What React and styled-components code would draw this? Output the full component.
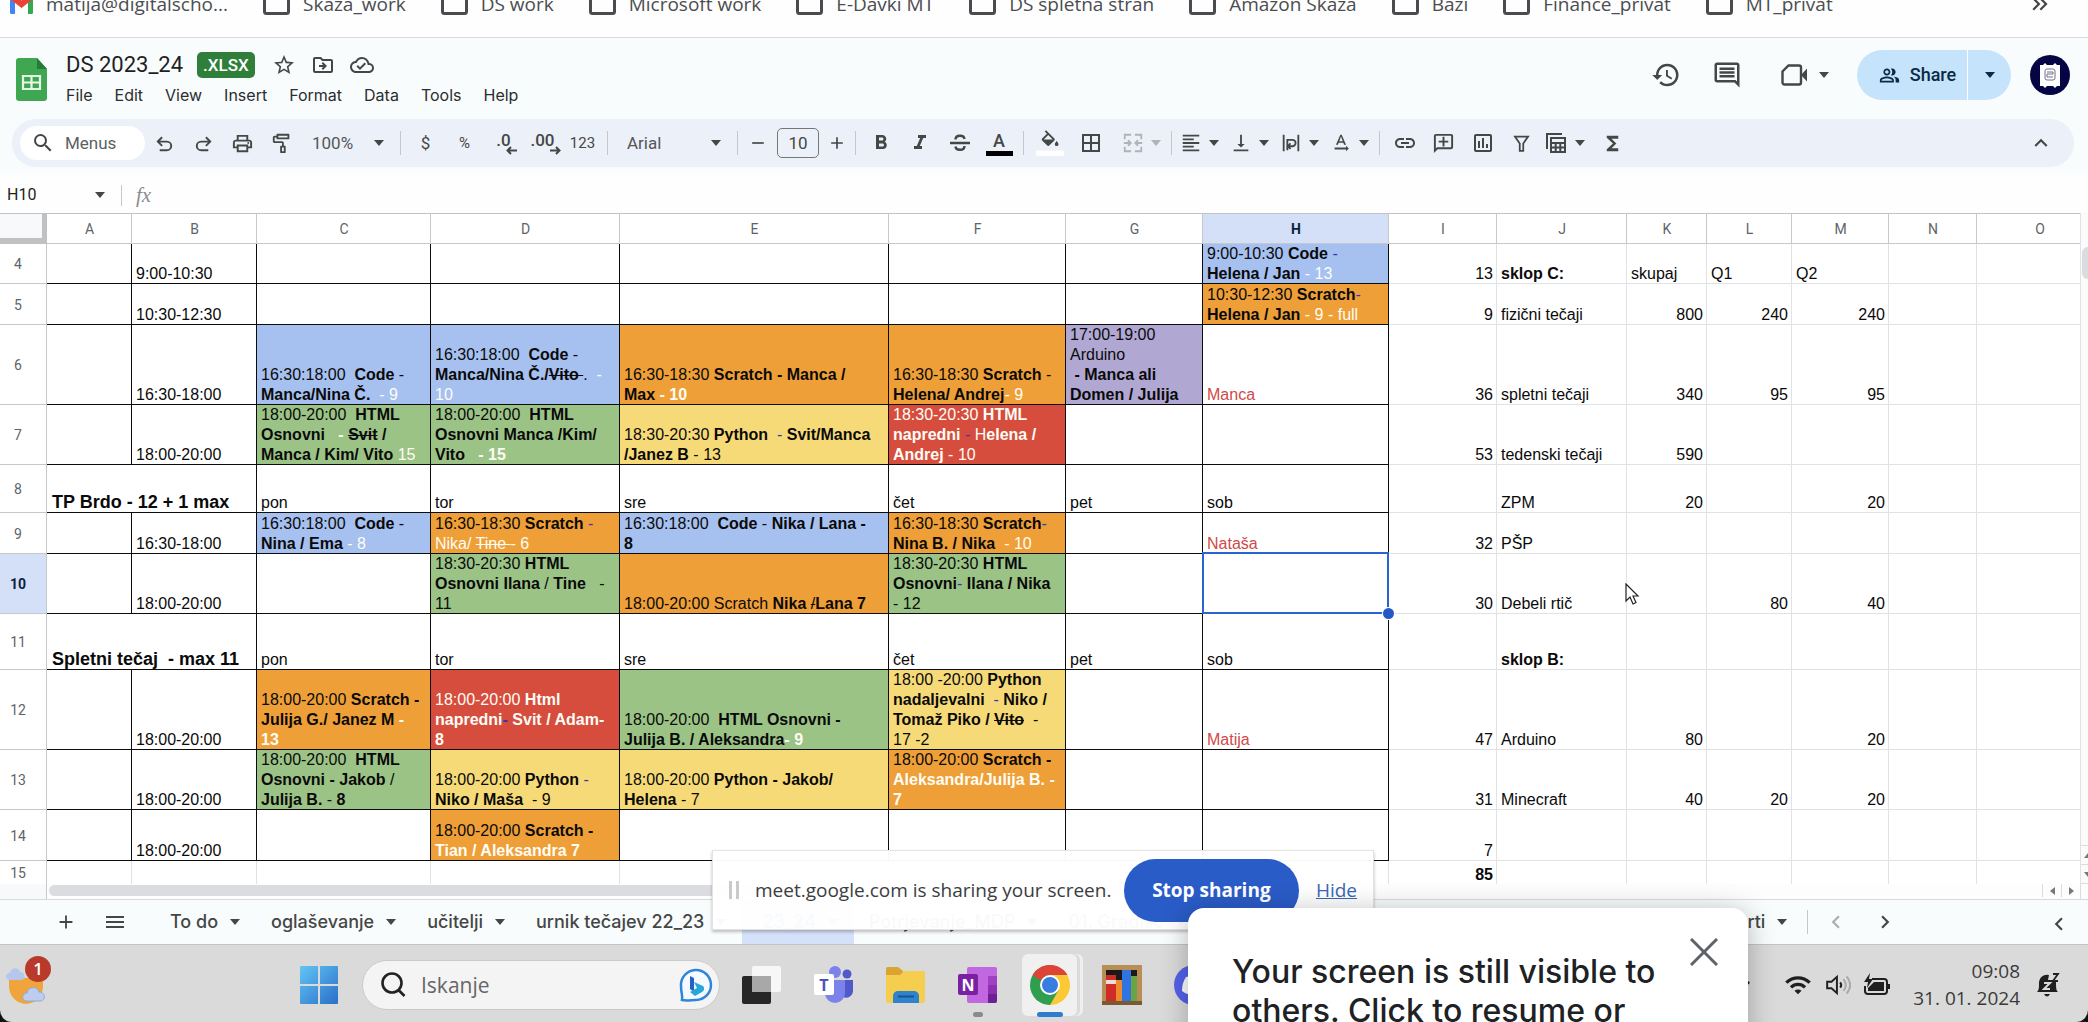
import React from 'react';
import styled, { createGlobalStyle, css } from 'styled-components';
import {
  MdStarBorder, MdOutlineDriveFileMove, MdOutlineCloudDone, MdHistory, MdOutlineComment,
  MdOutlinePeopleAlt, MdFormatBold, MdFormatItalic, MdBorderAll,
  MdFormatAlignLeft, MdVerticalAlignBottom, MdTextRotationNone, MdLink, MdOutlineAddComment,
  MdOutlineInsertChart, MdFunctions, MdOutlinePrint,
  MdOutlineImagesearchRoller, MdKeyboardArrowUp, MdKeyboardArrowDown, MdKeyboardDoubleArrowRight,
  MdSearch, MdAdd, MdRemove, MdMenu, MdChevronLeft, MdChevronRight, MdWifi,
} from 'react-icons/md';

const ui = 'Roboto, "Noto Sans", sans-serif';
const round = 'Inter, Roboto, sans-serif';
const system = '"Open Sans", "Noto Sans", sans-serif';
const sheet = '"Liberation Sans", Arial, sans-serif';

const Global = createGlobalStyle`
  * { box-sizing: border-box; }
  body { margin: 0; overflow: hidden; background: #111; font-family: ${ui}; color: #444746; }
  button, input, select { font: inherit; color: inherit; border: 0; margin: 0; padding: 0; background: none; outline: 0; }
  svg { display: block; flex: none; }
`;

const Screen = styled.div`
  position: relative;
  display: flex;
  flex-direction: column;
  height: 100vh;
  overflow: hidden;
`;

/* ---------- bookmarks ---------- */

const Bookmarks = styled.nav`
  display: flex;
  flex: none;
  align-items: flex-start;
  gap: 35px;
  height: 52px;
  margin-top: -14px;
  padding: 0 35px 0 10px;
  background: #fefefe;
  border-bottom: 1px solid #dadada;
`;

const Bookmark = styled.a`
  display: flex;
  align-items: center;
  gap: 13px;
  height: 36px;
  font: 19px/36px ${system};
  color: #4b4d50;
  text-decoration: none;
  white-space: nowrap;
`;

const More = styled.button`
  height: 36px;
  margin-left: auto;
  color: #444;
`;

const Folder = () => (
  <svg width="27" height="24" viewBox="0 0 27 24" fill="none" stroke="#4a4b4f" strokeWidth="3">
    <path d="M1.500 3.500a2 2 0 0 1 2-2h7l3 4h10a2 2 0 0 1 2 2v12a2 2 0 0 1-2 2h-20a2 2 0 0 1-2-2z" />
  </svg>
);

const Gmail = () => (
  <svg width="23" height="20" viewBox="0 0 23 20">
    <path fill="#4285f4" d="M0 4v14.500A1.500 1.500 0 0 0 1.500 20H5V8z" />
    <path fill="#34a853" d="M23 4v14.500a1.500 1.500 0 0 1-1.500 1.500H18V8z" />
    <path fill="#ea4335" d="M0 4c0-3 3-4 5-2.500L11.500 6.500 18 1.500c2-1.500 5-.5 5 2.500v1l-11.500 9L0 5z" />
  </svg>
);

/* ---------- document header ---------- */

const DocHeader = styled.header`
  display: flex;
  flex: none;
  align-items: flex-start;
  height: 81px;
  padding: 0 18px 0 16px;
  background: #f9fcfd;
`;

const DocLogo = styled.a`
  margin: 20px 19px 0 0;
`;

const DocText = styled.div`
  display: flex;
  flex-direction: column;
  padding-top: 12px;
`;

const TitleRow = styled.div`
  display: flex;
  align-items: center;
  height: 30px;
`;

const Title = styled.h1`
  margin: 0 14px 0 0;
  font: 400 22px/30px ${ui};
  color: #1f1f1f;
`;

const Badge = styled.span`
  margin-right: 17px;
  padding: 0 6px;
  border-radius: 5px;
  background: #2f7f3b;
  color: #fff;
  font: 500 17px/26px ${ui};
`;

const TitleIcons = styled.div`
  display: flex;
  gap: 15px;
`;

const IconButton = styled.button`
  display: flex;
  align-items: center;
  color: #444746;
`;

const MenuBar = styled.div`
  display: flex;
  gap: 22px;
  margin-top: 4px;
`;

const MenuItem = styled.button`
  font: 400 16px/22px ${round};
  color: #2b2d2e;
`;

const DocActions = styled.div`
  display: flex;
  align-items: center;
  gap: 31px;
  height: 50px;
  margin: 12px 0 0 auto;
`;

const Meet = styled.button`
  display: flex;
  align-items: center;
  gap: 10px;
  margin-left: 8px;
  color: #444746;
`;

const ShareGroup = styled.div`
  display: flex;
  gap: 1px;
  height: 50px;
  margin: 0 -12px 0 -4px;
  border-radius: 25px;
  overflow: hidden;
  background: #fff;
`;

const ShareButton = styled.button`
  display: flex;
  align-items: center;
  justify-content: center;
  gap: 10px;
  width: ${(p) => p.$width}px;
  padding-left: ${(p) => p.$pad || 0}px;
  background: #c5e3fb;
  color: #0b2a45;
  font: 500 18px/22px ${ui};
`;

/* ---------- toolbar ---------- */

const ToolbarArea = styled.div`
  flex: none;
  padding: 0 14px 0 12px;
  background: #f9fcfd;
`;

const Toolbar = styled.div`
  display: flex;
  align-items: center;
  height: 48px;
  padding: 0 20px 0 8px;
  border-radius: 24px;
  background: #ecf0f8;
`;

const MenusBox = styled.label`
  display: flex;
  align-items: center;
  gap: 10px;
  width: 125px;
  height: 34px;
  padding-left: 11px;
  border-radius: 17px;
  background: #fff;
  font-size: 17px;
  input { width: 70px; }
  input::placeholder { color: #5c5f62; opacity: 1; }
`;

const Tool = styled.button`
  display: flex;
  flex: none;
  align-items: center;
  justify-content: center;
  width: ${(p) => p.$width || 39}px;
  height: 36px;
  color: ${(p) => (p.$faded ? '#b0b4b9' : '#444746')};
  font-size: ${(p) => (p.$small ? 15 : 17)}px;
`;

const DropTool = styled(Tool)`
  justify-content: flex-start;
  gap: 6px;
  padding-left: ${(p) => p.$pad || 3}px;
`;

const Divider = styled.span`
  flex: none;
  width: 1px;
  height: 24px;
  margin: 0 5px 0 4px;
  background: #c4c8cc;
`;

const Picker = styled.label`
  display: flex;
  flex: none;
  align-items: center;
  width: ${(p) => p.$width}px;
  padding: 0 11px 0 ${(p) => p.$pad}px;
  font-size: 17px;
  select { flex: 1; min-width: 0; appearance: none; color: #54575a; }
`;

const SizeInput = styled.input`
  width: 42px;
  height: 30px;
  margin: 0 4px;
  border: 1px solid #747775;
  border-radius: 5px;
  text-align: center;
  font-size: 17px;
`;

const Decimal = styled.span`
  display: flex;
  flex-direction: column;
  font: 500 17px/16px ${ui};
  svg { align-self: flex-end; margin: -2px -6px 0 0; }
`;

const ColorLetter = styled.span`
  width: 27px;
  border-bottom: 5px solid #000;
  font: 500 18px/20px ${ui};
  text-align: center;
`;

const Collapse = styled(IconButton)`
  margin-left: auto;
`;

const Mirror = styled.span`
  transform: scaleX(-1);
`;

const Caret = () => (
  <svg width="12" height="12" viewBox="0 0 12 12" fill="currentColor"><path d="M1 3h10L6 9z" /></svg>
);

const Glyph = ({ children, size = 24, ...rest }) => (
  <svg width={size} height={size} viewBox="0 0 24 24" fill="none" stroke="currentColor" strokeWidth="2" {...rest}>{children}</svg>
);

const UndoIcon = () => <Glyph size={23}><path d="M7 19h7.500a4.500 4.500 0 0 0 0-9H5M9.500 5.500 5 10l4.500 4.500" /></Glyph>;
const RedoIcon = () => <Glyph size={23}><path d="M17 19H9.500a4.500 4.500 0 0 1 0-9H19M14.500 5.500 19 10l-4.500 4.500" /></Glyph>;
const FilterIcon = () => <Glyph size={21}><path d="M4.500 4h15L14 12v8.500h-4V12z" /></Glyph>;
const StrikeIcon = () => (
  <Glyph size={24} strokeWidth="2.400"><path d="M2 12h20M7.500 8.500C7.500 3.500 16 3.500 16.500 8M16.500 15c0 5-8.500 5-9 .5" /></Glyph>
);
const MergeIcon = () => (
  <Glyph size={22}><path d="M10 3H3v5M3 16v5h7M14 3h7v5M21 16v5h-7M2 12h7M6.500 9l3 3-3 3M22 12h-7M17.500 9l-3 3 3 3" /></Glyph>
);
const WrapIcon = () => (
  <Glyph size={22}><path d="M4 3v18M20 3v18M7 8.500h6.500a3.500 3.500 0 0 1 0 7H9M11.500 12.500l-3 3 3 3M8 8v12" /></Glyph>
);
const TableViewIcon = () => (
  <Glyph size={24}><path d="M3 18V3h15M7 7h14v14H7zM7 12h14M7 16.500h14M11.700 12v9M16.300 12v9" /></Glyph>
);
const FillIcon = () => (
  <svg width="28" height="28" viewBox="0 0 24 24" fill="#444746">
    <path d="M16.560 8.940 7.620 0 6.210 1.410l2.380 2.380-5.150 5.150a1.490 1.490 0 0 0 0 2.120l5.500 5.500c.29.29.68.44 1.060.44s.77-.15 1.060-.44l5.500-5.500c.59-.58.59-1.530 0-2.120zM5.210 10 10 5.210 14.790 10zM19 11.500s-2 2.170-2 3.500a2 2 0 0 0 4 0c0-1.330-2-3.500-2-3.500z" transform="translate(2.500 1) scale(.8)" />
    <path fill="#fff" d="M0 18.500h24v4.500H0z" />
  </svg>
);
const Arrow = ({ right }) => (
  <svg width="11" height="9" viewBox="0 0 11 9" fill="none" stroke="currentColor" strokeWidth="2">
    <path d={right ? 'M0 4.500h9M6 1l3.500 3.500L6 8' : 'M11 4.500H2M5 1 1.500 4.500 5 8'} />
  </svg>
);

/* ---------- formula bar ---------- */

const FormulaBar = styled.div`
  display: flex;
  flex: none;
  align-items: center;
  height: 46px;
  padding: 10px 0 0 7px;
  background: linear-gradient(#f9fcfd, #fefefe 14px);
`;

const NameBox = styled.input`
  width: 87px;
  font: 16px/20px ${ui};
  color: #1f1f1f;
`;

const Fx = styled.label`
  margin-left: 9px;
  font: italic 21px/24px "Liberation Serif", serif;
  color: #8a8d90;
`;

const FormulaDivider = styled(Divider)`
  height: 21px;
  margin-left: 15px;
`;

const FormulaInput = styled.input`
  flex: 1;
  margin-left: 12px;
`;

/* ---------- grid ---------- */

const GridArea = styled.main`
  display: flex;
  flex: 1;
  min-height: 0;
  overflow: hidden;
  background: #fff;
`;

const Viewport = styled.div`
  position: relative;
  flex: 1;
  min-width: 0;
  overflow: hidden;
`;

/* the last column continues past the visible edge */
const Table = styled.table`
  width: calc(100% + 23px);
  table-layout: fixed;
  border-collapse: separate;
  border-spacing: 0;
  font: 16px/20px ${sheet};
  color: #0a0a0a;
`;

const Row = styled.tr`
  height: ${(p) => p.$height}px;
`;

const ColHead = styled.th`
  padding: 0;
  height: 31px;
  font: ${(p) => (p.$active ? 700 : 400)} 14px/20px ${ui};
  color: ${(p) => (p.$active ? '#0b1f3f' : '#606468')};
  background: ${(p) => (p.$active ? '#d4e0f8' : '#fff')};
  box-shadow: inset -1px -1px #c6c8ca, inset 0 1px #c0c2c4;
`;

const Corner = styled(ColHead)`
  background: #f8f9fa;
  box-shadow: inset -5px -6px #bfc1c3, inset 0 1px #c0c2c4;
`;

const RowHead = styled.th`
  padding: 0 11px 0 0;
  font: ${(p) => (p.$active ? 700 : 400)} 14px/20px ${ui};
  color: ${(p) => (p.$active ? '#0b1f3f' : '#606468')};
  background: ${(p) => (p.$active ? '#d4e0f8' : '#fff')};
  box-shadow: inset -1px -1px #c6c8ca;
`;

const fills = {
  blue: '#a6c0f0', orange: '#ef9f37', green: '#9cc386', yellow: '#f7da78', red: '#d64d3e', purple: '#b0a7d2',
};

const Cell = styled.td`
  position: relative;
  padding: 0 4px;
  vertical-align: bottom;
  white-space: pre;
  text-align: ${(p) => (p.$number ? 'right' : 'left')};
  background: ${(p) => fills[p.$fill] || 'transparent'};
  box-shadow: inset -1px -1px ${(p) => (p.$framed ? '#0c0c0c' : '#e1e2e3')};
  ${(p) => p.$heading && css`padding-left: 5px; font: 700 18px/22px ${sheet};`}
`;

const Line = styled.div`
  height: 20px;
`;

const inks = { w: '#fdfdf5', l: '#3a34b8', r: '#cf4a4a' };

const Run = styled.span`
  font-weight: ${(p) => (p.$style.includes('b') ? 700 : 400)};
  text-decoration: ${(p) => (p.$style.includes('s') ? 'line-through' : 'none')};
  color: ${(p) => inks[[...p.$style].find((k) => inks[k])] || 'inherit'};
`;

const Selection = styled.span`
  position: absolute;
  inset: -2px 0 0 -1px;
  border: 2px solid #2a63d2;
  &::after {
    content: '';
    position: absolute;
    right: -7px;
    bottom: -7px;
    width: 11px;
    height: 11px;
    border-radius: 50%;
    background: #2558c4;
    box-shadow: 0 0 0 1px #fff;
    z-index: 2;
  }
`;

const Pointer = styled.svg`
  position: absolute;
  left: 1625px;
  top: 370px;
`;

const VScroll = styled.div`
  display: flex;
  flex-direction: column;
  flex: none;
  width: 8px;
  padding-top: 34px;
  border-left: 1px solid #e0e1e2;
  background: #fbfbfb;
`;

const VThumb = styled.div`
  height: 32px;
  margin-left: 1px;
  border-radius: 6px 0 0 6px;
  background: #dadce0;
`;

const VArrows = styled.div`
  margin-top: auto;
  display: flex;
  flex-direction: column;
  border-top: 1px solid #dadce0;
`;

const VArrow = styled.button`
  display: flex;
  align-items: center;
  width: 7px;
  height: 19px;
  padding-left: 3px;
  overflow: hidden;
  border-bottom: 1px solid #dadce0;
`;

const HScroll = styled.div`
  display: flex;
  flex: none;
  height: 15px;
  background: #fdfdfd;
`;

const HCorner = styled.div`
  width: 47px;
  background: #f8f9fa;
  border-right: 1px solid #c6c8ca;
`;

const HTrack = styled.div`
  flex: 1;
  padding: 1px 2px 3px;
`;

const HThumb = styled.div`
  width: 60%;
  height: 11px;
  border-radius: 6px;
  background: #dadce0;
`;

const HArrow = styled.button`
  display: flex;
  align-items: center;
  justify-content: center;
  width: 19px;
  height: 13px;
  border: solid #dadce0;
  border-width: 0 0 0 1px;
`;

const HEnd = styled.div`
  width: 8px;
  border-left: 1px solid #dadce0;
`;

const columns = [
  ['A', 85], ['B', 125], ['C', 174], ['D', 189], ['E', 269], ['F', 177], ['G', 137], ['H', 186],
  ['I', 108], ['J', 130], ['K', 80], ['L', 85], ['M', 97], ['N', 88], ['O', null],
];

const rows = [
  { n: 4, h: 40, B: '9:00-10:30',
    H: ['blue', ['9:00-10:30 '], ['Code', 'b'], [' -\n', 'l'], ['Helena / Jan', 'b'], [' - 13', 'w']],
    I: 13, J: [null, ['sklop C:', 'b']], K: 'skupaj', L: 'Q1', M: 'Q2' },
  { n: 5, h: 41, B: '10:30-12:30',
    H: ['orange', ['10:30-12:30 '], ['Scratch', 'b'], ['-\n', 'l'], ['Helena / Jan', 'b'], [' - 9 - full', 'w']],
    I: 9, J: 'fizični tečaji', K: 800, L: 240, M: 240 },
  { n: 6, h: 80, B: '16:30-18:00',
    C: ['blue', ['16:30:18:00  '], ['Code', 'b'], [' -\n'], ['Manca/Nina Č.', 'b'], ['  - ', 'w'], ['9', 'w']],
    D: ['blue', ['16:30:18:00  '], ['Code', 'b'], [' -\n'], ['Manca/Nina Č./', 'b'], ['Vito ', 'bs'], ['.'], ['  -\n10', 'w']],
    E: ['orange', ['16:30-18:30 '], ['Scratch - Manca /\nMax', 'b'], [' - 10', 'bw']],
    F: ['orange', ['16:30-18:30 '], ['Scratch', 'b'], [' -\n'], ['Helena/ Andrej', 'b'], ['- 9', 'w']],
    G: ['purple', ['17:00-19:00\nArduino\n '], ['- Manca ali\nDomen / Julija', 'b']],
    H: [null, ['Manca', 'r']],
    I: 36, J: 'spletni tečaji', K: 340, L: 95, M: 95 },
  { n: 7, h: 60, B: '18:00-20:00',
    C: ['green', ['18:00-20:00  '], ['HTML\nOsnovni', 'b'], ['   - ', 'bw'], ['Svit', 'bs'], [' /\nManca / Kim/ Vito', 'b'], [' 15', 'w']],
    D: ['green', ['18:00-20:00  '], ['HTML\nOsnovni Manca /Kim/\nVito', 'b'], ['   - 15', 'bw']],
    E: ['yellow', ['18:30-20:30 '], ['Python', 'b'], ['  - ', 'l'], ['Svit/Manca\n/Janez B', 'b'], [' - 13']],
    F: ['red', ['18:30-20:30 ', 'w'], ['HTML\nnapredni', 'bw'], [' - ', 'l'], ['H', 'w'], ['elena /\nAndrej', 'bw'], [' - 10', 'w']],
    I: 53, J: 'tedenski tečaji', K: 590 },
  { n: 8, h: 48, title: 'TP Brdo - 12 + 1 max', C: 'pon', D: 'tor', E: 'sre', F: 'čet', G: 'pet', H: 'sob', J: 'ZPM', K: 20, M: 20 },
  { n: 9, h: 41, B: '16:30-18:00',
    C: ['blue', ['16:30:18:00  '], ['Code', 'b'], [' -\n'], ['Nina / Ema', 'b'], [' - 8', 'w']],
    D: ['orange', ['16:30-18:30 '], ['Scratch', 'b'], [' -\n', 'l'], ['Nika/ ', 'w'], ['Tine ', 'ws'], ['- 6', 'w']],
    E: ['blue', ['16:30:18:00  '], ['Code', 'b'], [' - '], ['Nika / Lana -\n8', 'b']],
    F: ['orange', ['16:30-18:30 '], ['Scratch', 'b'], ['-\n', 'l'], ['Nina B. / Nika', 'b'], ['  - 10', 'w']],
    H: [null, ['Nataša', 'r']],
    I: 32, J: 'PŠP' },
  { n: 10, h: 60, B: '18:00-20:00',
    D: ['green', ['18:30-20:30 '], ['HTML\nOsnovni Ilana', 'b'], [' / '], ['Tine', 'b'], ['   -\n11']],
    E: ['orange', ['18:00-20:00 Scratch '], ['Nika ', 'b'], ['/', 's'], ['Lana 7', 'b']],
    F: ['green', ['18:30-20:30 '], ['HTML\nOsnovni', 'b'], ['- ', 'l'], ['Ilana / Nika\n', 'b'], ['- 12']],
    I: 30, J: 'Debeli rtič', L: 80, M: 40 },
  { n: 11, h: 56, title: 'Spletni tečaj  - max 11', C: 'pon', D: 'tor', E: 'sre', F: 'čet', G: 'pet', H: 'sob', J: [null, ['sklop B:', 'b']] },
  { n: 12, h: 80, B: '18:00-20:00',
    C: ['orange', ['18:00-20:00 '], ['Scratch -\nJulija G./ Janez M', 'b'], [' -\n13', 'bw']],
    D: ['red', ['18:00-20:00 ', 'w'], ['Html\nnapredni', 'bw'], ['-', 'bl'], [' Svit / Adam-\n8', 'bw']],
    E: ['green', ['18:00-20:00  '], ['HTML Osnovni -\nJulija B. / Aleksandra', 'b'], ['- 9', 'bw']],
    F: ['yellow', ['18:00 -20:00 '], ['Python\nnadaljevalni', 'b'], ['  - ', 'l'], ['Niko /\nTomaž Piko / ', 'b'], ['Vito', 'bs'], ['  -\n17 -2']],
    H: [null, ['Matija', 'r']],
    I: 47, J: 'Arduino', K: 80, M: 20 },
  { n: 13, h: 60, B: '18:00-20:00',
    C: ['green', ['18:00-20:00  '], ['HTML\nOsnovni - Jakob', 'b'], [' /\n'], ['Julija B.', 'b'], [' - '], ['8', 'b']],
    D: ['yellow', ['18:00-20:00 '], ['Python', 'b'], [' -\n', 'l'], ['Niko / Maša', 'b'], ['  - 9']],
    E: ['yellow', ['18:00-20:00 '], ['Python - Jakob/\nHelena', 'b'], [' - 7']],
    F: ['orange', ['18:00-20:00 '], ['Scratch -\n', 'b'], ['Aleksandra/Julija B. -\n7', 'bw']],
    I: 31, J: 'Minecraft', K: 40, L: 20, M: 20 },
  { n: 14, h: 51, B: '18:00-20:00',
    D: ['orange', ['18:00-20:00 '], ['Scratch -\n', 'b'], ['Tian / Aleksandra 7', 'bw']],
    I: 7 },
  { n: 15, h: 24, I: [null, ['85', 'b']] },
];

/* splits styled runs at their line breaks into one list of runs per line */
const toLines = (runs) => {
  const lines = [[]];
  runs.forEach(([text, style = '']) => {
    text.split('\n').forEach((part, i) => {
      if (i > 0) lines.push([]);
      if (part) lines[lines.length - 1].push([part, style]);
    });
  });
  return lines;
};

const SheetCell = ({ row, col }) => {
  const value = row[col];
  const framed = row.n < 15 && col <= 'H';
  const rich = Array.isArray(value);
  return (
    <Cell $framed={framed} $fill={rich ? value[0] : null} $number={typeof value === 'number' || col === 'I'}>
      {rich
        ? toLines(value.slice(1)).map((line, i) => (
          <Line key={i}>{line.map(([text, style], k) => <Run key={k} $style={style}>{text}</Run>)}</Line>
        ))
        : value}
      {row.n === 10 && col === 'H' && <Selection />}
    </Cell>
  );
};

/* ---------- sheet tabs ---------- */

const TabBar = styled.nav`
  display: flex;
  flex: none;
  align-items: center;
  height: 45px;
  padding-left: 53px;
  background: #f9fcfd;
  border-top: 1px solid #d8dadc;
`;

const TabTool = styled.button`
  display: flex;
  justify-content: center;
  width: 25px;
  margin-right: 24px;
  color: #444746;
`;

const Tab = styled.button`
  display: flex;
  flex: none;
  align-items: center;
  gap: 11px;
  height: 44px;
  padding: 0 15px 0 ${(p) => (p.$active ? 20 : 15)}px;
  background: ${(p) => (p.$active ? '#d5e1f8' : 'transparent')};
  color: ${(p) => (p.$active ? '#0b57d0' : '#444746')};
  font: 500 18px/22px ${round};
  white-space: nowrap;
`;

const TabList = styled.div`
  display: flex;
  margin-left: 4px;
  flex: 0 0 81%;
  overflow: hidden;
`;

const LastTab = styled(Tab)`
  margin-left: auto;
`;

const TabNav = styled.button`
  margin-left: ${(p) => p.$gap}px;
  color: ${(p) => (p.$faded ? '#a9adb0' : '#444746')};
`;

const TabCollapse = styled(TabNav)`
  margin: 4px 16px 0 auto;
`;

/* ---------- taskbar ---------- */

const Taskbar = styled.footer`
  position: relative;
  display: flex;
  flex: none;
  align-items: center;
  height: 78px;
  padding: 3px 28px 0 6px;
  border-top: 1px solid #c4c4c4;
  border-radius: 0 0 12px 12px;
  background: #dadadb;
`;

const Weather = styled.button`
  position: relative;
  width: 46px;
  margin-right: 248px;
`;

const Count = styled.span`
  position: absolute;
  right: 1px;
  top: -10px;
  width: 26px;
  height: 26px;
  border-radius: 50%;
  background: #b93a2a;
  color: #fff;
  font: 600 17px/26px ${system};
  text-align: center;
`;

const TaskSearch = styled.label`
  display: flex;
  align-items: center;
  width: 358px;
  height: 50px;
  margin: 0 22px 0 24px;
  padding: 0 6px 0 17px;
  border: 1px solid #cacaca;
  border-radius: 25px;
  background: #f4f4f4;
  font: 21px/28px ${system};
  color: #5c5c5c;
  input { flex: 1; min-width: 0; margin-left: 15px; }
  input::placeholder { color: #666; opacity: 1; }
`;

const Apps = styled.div`
  display: flex;
  gap: 17px;
  margin-left: -8px;
`;

const AppButton = styled.button`
  position: relative;
  display: flex;
  align-items: center;
  justify-content: center;
  width: 55px;
  height: 62px;
  border-radius: 6px;
  ${(p) => p.$open && css`background: #f0f0f1; box-shadow: 3px 0 #dadadb, 6px 0 #efefef;`}
  ${(p) => p.$mark && css`
    &::after {
      content: '';
      position: absolute;
      bottom: -1px;
      width: ${p.$mark}px;
      height: 5px;
      border-radius: 3px;
      background: ${p.$open ? '#2f7bd0' : '#8a8a8a'};
    }
  `}
`;

const Tray = styled.div`
  display: flex;
  align-items: center;
  gap: 13px;
  margin-left: auto;
  color: #1f1f1f;
`;

const TrayToggle = styled.button`
  margin-right: 14px;
`;

const Clock = styled.time`
  display: flex;
  flex-direction: column;
  margin: 0 3px 0 10px;
  font: 19px/27px ${system};
  color: #3a3a3a;
  text-align: right;
`;

const StartIcon = () => (
  <svg width="38" height="38" viewBox="0 0 38 38">
    <defs><linearGradient id="win" x1="0" y1="0" x2="1" y2="1"><stop offset="0" stopColor="#62c5f5" /><stop offset="1" stopColor="#2a6fc8" /></linearGradient></defs>
    <path fill="url(#win)" d="M0 1a1 1 0 0 1 1-1h17v18H0zM20 0h17a1 1 0 0 1 1 1v17H20zM0 20h18v18H1a1 1 0 0 1-1-1zM20 20h18v17a1 1 0 0 1-1 1H20z" />
  </svg>
);
const WeatherIcon = () => (
  <svg width="42" height="38" viewBox="0 0 42 38">
    <path d="M3 12h34v8a17 18 0 0 1-34 0z" fill="#f0a53c" />
    <path d="M3 14c-4-1-4-7 1-7 1-6 9-6 10-1 6 0 6 8 1 8z" fill="#b5c7ec" />
    <path d="M20 35c-5-1-4-8 1-8 1-7 11-7 12-1 7 0 7 9 1 9z" fill="#bccdf0" stroke="#93a9dc" />
  </svg>
);
const BingIcon = () => (
  <svg width="34" height="34" viewBox="0 0 34 34" fill="none">
    <path d="M3 32c1-4-1-7-1-14A15 15 0 1 1 17 32c-5 0-9 1-14 0z" fill="#f4faff" stroke="#2f86d8" strokeWidth="2.500" />
    <path d="M11 8l4 2v14l-4-3z" fill="#2462c8" />
    <path d="M15 14l9 4c2 2 1 5-1 6l-7 4-5-4 7-4z" fill="#27a8d8" />
  </svg>
);
const TaskViewIcon = () => (
  <svg width="39" height="38" viewBox="0 0 39 38">
    <rect y="10" width="29" height="28" rx="2" fill="#262626" />
    <rect x="10" width="29" height="26" rx="2" fill="#f7f7f7" />
    <path d="M10 10h19v16H10z" fill="#a8a8a8" />
  </svg>
);
const TileLetter = styled.span`
  position: absolute;
  left: 8px;
  top: 20px;
  width: 20px;
  font: 700 16px/22px ${system};
  color: ${(p) => p.$ink};
  text-align: center;
`;
const TeamsIcon = () => (
  <svg width="39" height="38" viewBox="0 0 39 38">
    <circle cx="21" cy="6" r="6" fill="#7b83eb" /><circle cx="33" cy="8" r="4.500" fill="#5059c9" />
    <path d="M27 14h12v11a7 7 0 0 1-10 6z" fill="#5059c9" />
    <path d="M11 14h20v13a10 10 0 0 1-20 0z" fill="#7b83eb" />
    <rect y="8" width="20" height="21" rx="2" fill="#fff" />
  </svg>
);
const ExplorerIcon = () => (
  <svg width="39" height="36" viewBox="0 0 39 36">
    <path d="M0 2a2 2 0 0 1 2-2h10l5 4v6H0z" fill="#d9a430" />
    <path d="M0 8h14l4-4h19a2 2 0 0 1 2 2v28a2 2 0 0 1-2 2H2a2 2 0 0 1-2-2z" fill="#f5cd4f" />
    <path d="M7 36V29a5 5 0 0 1 5-5h16a5 5 0 0 1 5 5v7z" fill="#2f83cc" /><path d="M12 29.500h16" stroke="#17548f" strokeWidth="2" />
  </svg>
);
const OneNoteIcon = () => (
  <svg width="39" height="36" viewBox="0 0 39 36">
    <rect x="9" width="30" height="36" rx="2" fill="#c168e0" /><path d="M30 9h9v9h-9z" fill="#a33fc4" /><path d="M30 18h9v9h-9z" fill="#8c2fb0" /><path d="M30 27h9v7a2 2 0 0 1-2 2h-7z" fill="#6d1f94" />
    <rect y="7" width="20" height="21" rx="2" fill="#7a21a3" />
  </svg>
);
const ChromeIcon = () => (
  <svg width="40" height="40" viewBox="0 0 40 40">
    <path d="M20 20 2.700 10A20 20 0 0 1 37.300 10z" fill="#db4437" />
    <path d="M20 20 37.300 10A20 20 0 0 1 20 40z" fill="#fbc934" />
    <path d="M20 20v20A20 20 0 0 1 2.700 10z" fill="#2f9e4f" />
    <path d="M20 10h17.300L28.700 25z" fill="#fbc934" /><path d="M11.300 25 2.700 10 20 10z" fill="#2f9e4f" /><path d="M2.700 10A20 20 0 0 1 37.300 10H20a10 10 0 0 0-9 6z" fill="#db4437" />
    <path d="M28.700 25 20 40l-2-10z" fill="#2f9e4f" />
    <circle cx="20" cy="20" r="10" fill="#fff" /><circle cx="20" cy="20" r="8" fill="#3a7de0" />
  </svg>
);
const BooksIcon = () => (
  <svg width="40" height="40" viewBox="0 0 40 40">
    <path d="M0 0h40v40H0z" fill="#b98e56" /><path d="M4 5h31v31H4z" fill="#1a1a1a" />
    <path d="M4 10h10v26H4z" fill="#cf2c28" /><path d="M4 15h10v4H4z" fill="#f2dcd8" /><path d="M14 15h6v21h-6z" fill="#ef8a2c" /><path d="M20 5h9v31h-9z" fill="#2f74e0" /><path d="M29 11h6v25h-6z" fill="#6aa544" /><path d="M0 36h40v4H0z" fill="#7a5a30" />
  </svg>
);
const DiscordIcon = () => (
  <svg width="40" height="40" viewBox="0 0 40 40"><circle cx="20" cy="20" r="20" fill="#5562ea" /><path d="M12 12q8-3 16 0 4 6 4 14-4 3-6 3l-2-3h-8l-2 3q-2 0-6-3 0-8 4-14z" fill="#fff" /></svg>
);
const SpeakerIcon = () => (
  <Glyph size={26} strokeWidth="1.800"><path d="M2 9v6h4l5 4.500v-15L6 9zM14 9.500q2 2.500 0 5" /><path d="M17 6.500q4.500 5.500 0 11M20 4q6.500 8 0 16" stroke="#aaa" /></Glyph>
);
const BatteryIcon = () => (
  <svg width="26" height="24" viewBox="0 0 26 24"><path d="M8 6h12a3 3 0 0 1 3 3v9a3 3 0 0 1-3 3H4a3 3 0 0 1-3-3v-5" fill="none" stroke="#1f1f1f" strokeWidth="2" /><path d="M4 15 10 9h10v9H4zM24 11h2v5h-2zM6 0 0 9h4l-1 6 6-9H5z" fill="#1f1f1f" /></svg>
);
const BellIcon = () => (
  <svg width="24" height="26" viewBox="0 0 24 26"><path d="M1 20c2-2 2-4 2-9a8 8 0 0 1 10-8l-1 5h8c0 8 0 10 2 12zM8 22h6q-3 5-6 0z" fill="#1f1f1f" /><path d="M8 11h6l-6 6h6" fill="none" stroke="#dadadb" strokeWidth="2" /><path d="M17 2h5l-5 7h5" fill="none" stroke="#1f1f1f" strokeWidth="1.800" /></svg>
);

/* ---------- overlays ---------- */

const ShareNotice = styled.aside`
  position: absolute;
  left: 34.1%;
  bottom: 92px;
  display: flex;
  align-items: center;
  width: 662px;
  height: 80px;
  padding: 0 16px;
  border: 1px solid #e3e3e3;
  background: rgba(255, 255, 255, 0.97);
  box-shadow: 0 2px 3px rgba(0, 0, 0, 0.25);
  font: 19px/28px ${system};
  color: #3b3d40;
  white-space: nowrap;
`;

const Grip = styled.span`
  width: 10px;
  height: 18px;
  margin-right: 16px;
  border: solid #c9cacc;
  border-width: 0 3px;
`;

const StopButton = styled.button`
  flex: none;
  width: 175px;
  height: 63px;
  margin: 0 17px 0 auto;
  border-radius: 32px;
  background: #2a5cc8;
  color: #fff;
  font: 700 19px/28px ${system};
`;

const HideLink = styled.a`
  color: #3a67b8;
`;

const Dialog = styled.section`
  position: absolute;
  left: 56.9%;
  bottom: -86px;
  display: flex;
  width: 560px;
  height: 200px;
  padding: 44px 30px 0 44px;
  border-radius: 16px;
  background: #fff;
  box-shadow: 0 4px 28px rgba(0, 0, 0, 0.28);
`;

const DialogText = styled.p`
  flex: 1;
  margin: 0;
  font: 500 32px/39px ${round};
  color: #202124;
  white-space: pre;
`;

const CloseButton = styled.button`
  align-self: flex-start;
  margin-top: -14px;
`;

const bookmarks = ['Skaza_work', 'DS work', 'Microsoft work', 'E-Davki MT', 'DS spletna stran', 'Amazon Skaza', 'Bazi', 'Finance_privat', 'MT_privat'];
const menus = ['File', 'Edit', 'View', 'Insert', 'Format', 'Data', 'Tools', 'Help'];
const tabs = ['To do', 'oglaševanje', 'učitelji', 'urnik tečajev 22_23', '23_24', 'Potrjevanje_MDP', '01. Gradisc'];

export default function App() {
  return (
    <Screen>
      <Global />
      <Bookmarks aria-label="Bookmarks">
        <Bookmark href="#mail"><Gmail />matija@digitalscho...</Bookmark>
        {bookmarks.map((name) => <Bookmark key={name} href="#folder"><Folder />{name}</Bookmark>)}
        <More aria-label="More bookmarks"><MdKeyboardDoubleArrowRight size={26} /></More>
      </Bookmarks>

      <DocHeader>
        <DocLogo href="#home" aria-label="Sheets home">
          <svg width="31" height="43" viewBox="0 0 31 43">
            <path d="M0 3a3 3 0 0 1 3-3h18l10 11v29a3 3 0 0 1-3 3H3a3 3 0 0 1-3-3z" fill="#3fa651" />
            <path d="M21 0l10 11H21z" fill="#267a3a" />
            <path d="M7 18h17v13H7zM7 24.500h17M15.500 18v13" fill="none" stroke="#e6f7e6" strokeWidth="2.200" />
          </svg>
        </DocLogo>
        <DocText>
          <TitleRow>
            <Title>DS 2023_24</Title>
            <Badge>.XLSX</Badge>
            <TitleIcons>
              <IconButton aria-label="Star"><MdStarBorder size={24} /></IconButton>
              <IconButton aria-label="Move"><MdOutlineDriveFileMove size={24} /></IconButton>
              <IconButton aria-label="Saved to Drive"><MdOutlineCloudDone size={24} /></IconButton>
            </TitleIcons>
          </TitleRow>
          <MenuBar>{menus.map((m) => <MenuItem key={m}>{m}</MenuItem>)}</MenuBar>
        </DocText>
        <DocActions>
          <IconButton aria-label="Version history"><MdHistory size={30} /></IconButton>
          <IconButton aria-label="Comments"><MdOutlineComment size={30} /></IconButton>
          <Meet aria-label="Join a call">
            <svg width="27" height="22" viewBox="0 0 27 22" fill="none" stroke="#444746" strokeWidth="2.400">
              <path d="M7.500 1.500H18a2 2 0 0 1 2 2v15a2 2 0 0 1-2 2H3.500a2 2 0 0 1-2-2V7.500z" /><path d="M20 11l6-6.500v13z" fill="#444746" stroke="none" />
            </svg>
            <Caret />
          </Meet>
          <ShareGroup>
            <ShareButton $width={110} $pad={11}><MdOutlinePeopleAlt size={21} />Share</ShareButton>
            <ShareButton $width={43} aria-label="Share options"><Caret /></ShareButton>
          </ShareGroup>
          <IconButton aria-label="Account">
            <svg width="40" height="40" viewBox="0 0 40 40">
              <circle cx="20" cy="20" r="20" fill="#050545" />
              <path d="M10 10h3l2-2 2 2h6l2-2 2 2h3v21h-3l-2 2-2-2h-6l-2 2-2-2h-3z" fill="#fff" />
              <rect x="15" y="14" width="10" height="11" rx="2" fill="none" stroke="#70708c" /><path d="M17 17h6v2h-6v3h6" fill="none" stroke="#70708c" />
            </svg>
          </IconButton>
        </DocActions>
      </DocHeader>

      <ToolbarArea>
        <Toolbar role="toolbar">
          <MenusBox><MdSearch size={24} /><input placeholder="Menus" aria-label="Menus" /></MenusBox>
          <Tool aria-label="Undo"><UndoIcon /></Tool>
          <Tool aria-label="Redo"><RedoIcon /></Tool>
          <Tool aria-label="Print"><MdOutlinePrint size={23} /></Tool>
          <Tool aria-label="Paint format"><MdOutlineImagesearchRoller size={22} /></Tool>
          <Picker $width={95} $pad={11}><select aria-label="Zoom"><option>100%</option></select><Caret /></Picker>
          <Divider />
          <Tool>$</Tool>
          <Tool $small>%</Tool>
          <Tool aria-label="Decrease decimal places"><Decimal>.0<Arrow /></Decimal></Tool>
          <Tool aria-label="Increase decimal places"><Decimal>.00<Arrow right /></Decimal></Tool>
          <Tool $width={41} $small>123</Tool>
          <Divider />
          <Picker $width={120} $pad={14}><select aria-label="Font"><option>Arial</option></select><Caret /></Picker>
          <Divider />
          <Tool $width={30} aria-label="Decrease font size"><MdRemove size={20} /></Tool>
          <SizeInput defaultValue="10" aria-label="Font size" />
          <Tool $width={28} aria-label="Increase font size"><MdAdd size={20} /></Tool>
          <Divider />
          <Tool aria-label="Bold"><MdFormatBold size={24} /></Tool>
          <Tool $width={40} aria-label="Italic"><MdFormatItalic size={24} /></Tool>
          <Tool aria-label="Strikethrough"><StrikeIcon /></Tool>
          <Tool $width={40}><ColorLetter>A</ColorLetter></Tool>
          <Divider />
          <Tool $width={41} aria-label="Fill color"><FillIcon /></Tool>
          <Tool $width={41} aria-label="Borders"><MdBorderAll size={24} /></Tool>
          <DropTool $width={56} $pad={11} $faded aria-label="Merge cells"><MergeIcon /><Caret /></DropTool>
          <Divider />
          <DropTool $width={50} aria-label="Horizontal align"><MdFormatAlignLeft size={22} /><Caret /></DropTool>
          <DropTool $width={50} aria-label="Vertical align"><MdVerticalAlignBottom size={22} /><Caret /></DropTool>
          <DropTool $width={50} aria-label="Text wrapping"><WrapIcon /><Caret /></DropTool>
          <DropTool $width={48} aria-label="Text rotation"><MdTextRotationNone size={22} /><Caret /></DropTool>
          <Divider />
          <Tool aria-label="Insert link"><MdLink size={24} /></Tool>
          <Tool aria-label="Insert comment"><Mirror><MdOutlineAddComment size={23} /></Mirror></Tool>
          <Tool aria-label="Insert chart"><MdOutlineInsertChart size={24} /></Tool>
          <Tool aria-label="Create a filter"><FilterIcon /></Tool>
          <DropTool $width={52} aria-label="Table views"><TableViewIcon /><Caret /></DropTool>
          <Tool aria-label="Functions"><MdFunctions size={23} /></Tool>
          <Collapse aria-label="Hide the menus"><MdKeyboardArrowUp size={26} /></Collapse>
        </Toolbar>
      </ToolbarArea>

      <FormulaBar>
        <NameBox defaultValue="H10" aria-label="Name box" />
        <Caret />
        <FormulaDivider />
        <Fx htmlFor="formula">fx</Fx>
        <FormulaInput id="formula" />
      </FormulaBar>

      <GridArea>
        <Viewport>
          <Table>
            <colgroup>
              <col width="47" />
              {columns.map(([name, width]) => <col key={name} width={width || undefined} />)}
            </colgroup>
            <thead>
              <tr>
                <Corner />
                {columns.map(([name]) => <ColHead key={name} $active={name === 'H'}>{name}</ColHead>)}
              </tr>
            </thead>
            <tbody>
              {rows.map((row) => (
                <Row key={row.n} $height={row.h}>
                  <RowHead $active={row.n === 10}>{row.n}</RowHead>
                  {row.title && <Cell colSpan={2} $framed $heading>{row.title}</Cell>}
                  {columns.slice(row.title ? 2 : 0).map(([name]) => <SheetCell key={name} row={row} col={name} />)}
                </Row>
              ))}
            </tbody>
          </Table>
          <Pointer width="15" height="23" viewBox="0 0 15 23" fill="#fff" stroke="#222" strokeWidth="1.200">
            <path d="M1 1v17l4-4 3 7 3-1.500-3-6.500h5z" />
          </Pointer>
        </Viewport>
        <VScroll>
          <VThumb />
          <VArrows>
            <VArrow aria-label="Scroll up"><svg width="8" height="5" viewBox="0 0 8 5" fill="#777"><path d="M0 5h8L4 0z" /></svg></VArrow>
            <VArrow aria-label="Scroll down"><svg width="8" height="5" viewBox="0 0 8 5" fill="#777"><path d="M0 0h8L4 5z" /></svg></VArrow>
          </VArrows>
        </VScroll>
      </GridArea>

      <HScroll>
        <HCorner />
        <HTrack><HThumb /></HTrack>
        <HArrow aria-label="Scroll left"><svg width="5" height="8" viewBox="0 0 5 8" fill="#777"><path d="M5 0v8L0 4z" /></svg></HArrow>
        <HArrow aria-label="Scroll right"><svg width="5" height="8" viewBox="0 0 5 8" fill="#777"><path d="M0 0v8l5-4z" /></svg></HArrow>
        <HEnd />
      </HScroll>

      <TabBar>
        <TabTool aria-label="Add sheet"><MdAdd size={22} /></TabTool>
        <TabTool aria-label="All sheets"><MdMenu size={24} /></TabTool>
        <TabList>
          {tabs.map((t) => <Tab key={t} $active={t === '23_24'}>{t}<Caret /></Tab>)}
          <LastTab>Koncerti<Caret /></LastTab>
        </TabList>
        <Divider />
        <TabNav $gap={10} $faded aria-label="Scroll tabs left"><MdChevronLeft size={26} /></TabNav>
        <TabNav $gap={23} aria-label="Scroll tabs right"><MdChevronRight size={26} /></TabNav>
        <TabCollapse aria-label="Show side panel"><MdChevronLeft size={26} /></TabCollapse>
      </TabBar>

      <Taskbar>
        <Weather aria-label="Weather"><WeatherIcon /><Count>1</Count></Weather>
        <IconButton aria-label="Start"><StartIcon /></IconButton>
        <TaskSearch>
          <svg width="26" height="26" viewBox="0 0 26 26" fill="none" stroke="#222" strokeWidth="2.600"><circle cx="12" cy="11" r="9.500" /><path d="M18.500 18l6 6" /></svg>
          <input placeholder="Iskanje" aria-label="Iskanje" />
          <BingIcon />
        </TaskSearch>
        <Apps>
          <AppButton aria-label="Task view"><TaskViewIcon /></AppButton>
          <AppButton aria-label="Teams"><TeamsIcon /><TileLetter $ink="#4b53bc">T</TileLetter></AppButton>
          <AppButton aria-label="File Explorer"><ExplorerIcon /></AppButton>
          <AppButton aria-label="OneNote" $mark={10}><OneNoteIcon /><TileLetter $ink="#fff">N</TileLetter></AppButton>
          <AppButton aria-label="Chrome" $open $mark={26}><ChromeIcon /></AppButton>
          <AppButton aria-label="Library"><BooksIcon /></AppButton>
          <AppButton aria-label="Discord"><DiscordIcon /></AppButton>
        </Apps>
        <Tray>
          <TrayToggle aria-label="Hidden icons"><MdKeyboardArrowDown size={28} /></TrayToggle>
          <MdWifi size={28} />
          <SpeakerIcon />
          <BatteryIcon />
          <Clock><span>09:08</span><span>31. 01. 2024</span></Clock>
          <BellIcon />
        </Tray>
      </Taskbar>

      <ShareNotice>
        <Grip />
        meet.google.com is sharing your screen.
        <StopButton>Stop sharing</StopButton>
        <HideLink href="#hide">Hide</HideLink>
      </ShareNotice>
      <Dialog role="dialog">
        <DialogText>{'Your screen is still visible to\nothers. Click to resume or'}</DialogText>
        <CloseButton aria-label="Close">
          <svg width="28" height="28" viewBox="0 0 28 28" stroke="#5f6368" strokeWidth="3"><path d="M1 1l26 26M27 1 1 27" /></svg>
        </CloseButton>
      </Dialog>
    </Screen>
  );
}
